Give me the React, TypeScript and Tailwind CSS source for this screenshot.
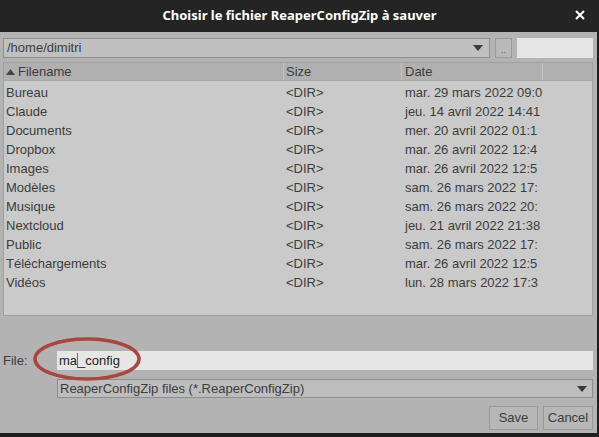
import React from "react";

const rows = [
  ["Bureau", "mar. 29 mars 2022 09:0"],
  ["Claude", "jeu. 14 avril 2022 14:41"],
  ["Documents", "mer. 20 avril 2022 01:1"],
  ["Dropbox", "mar. 26 avril 2022 12:4"],
  ["Images", "mar. 26 avril 2022 12:5"],
  ["Modèles", "sam. 26 mars 2022 17:"],
  ["Musique", "sam. 26 mars 2022 20:"],
  ["Nextcloud", "jeu. 21 avril 2022 21:38"],
  ["Public", "sam. 26 mars 2022 17:"],
  ["Téléchargements", "mar. 26 avril 2022 12:5"],
  ["Vidéos", "lun. 28 mars 2022 17:3"],
];

function Caret() {
  return (
    <svg width="10" height="6" viewBox="0 0 10 6" className="shrink-0">
      <path d="M0 0h10L5 6z" fill="#3a3a3a" />
    </svg>
  );
}

export default function App() {
  return (
    <div
      className="w-[599px] h-[437px] bg-[#1e1e1e] flex flex-col overflow-hidden text-[13px] text-[#3c3c3c]"
      style={{ fontFamily: '"Liberation Sans", Arial, sans-serif' }}
    >
      {/* title bar */}
      <div className="h-[32px] shrink-0 flex items-center relative bg-[#242424]">
        <div
          className="flex-1 text-center text-white font-bold text-[13px]"
          style={{ fontFamily: '"Noto Sans", "Open Sans", sans-serif' }}
        >
          Choisir le fichier ReaperConfigZip à sauver
        </div>
        <div className="absolute right-[14px] top-[10px] text-white">
          <svg width="10" height="10" viewBox="0 0 10 10">
            <path d="M1 1l8 8M9 1l-8 8" stroke="#fff" strokeWidth="2" />
          </svg>
        </div>
      </div>

      {/* body */}
      <div className="flex-1 bg-[#b3b3b3] mr-[2px] mb-[4px] flex flex-col pl-[3px] pr-[4px] pt-[6px] relative">
        {/* path row */}
        <div className="flex items-center h-[20px] gap-[5px]">
          <div className="flex-1 h-full bg-[#c0c0c0] border border-[#8e8e8e] flex items-center pl-[3px] pr-[6px]">
            <span className="flex-1">/home/dimitri</span>
            <Caret />
          </div>
          <div className="w-[17px] h-full border border-[#999] bg-[#b9b9b9] flex items-end justify-center text-[9px] leading-[14px] text-[#555]">
            ..
          </div>
          <div className="w-[76px] h-full bg-[#e6e6e6]" />
        </div>

        {/* list */}
        <div className="mt-[4px] h-[254px] bg-[#cacaca] border border-[#a0a0a0] flex flex-col">
          <div className="h-[18px] bg-[#b0b0b0] flex items-center border-b border-[#a6a6a6]">
            <div className="w-[280px] flex items-center pl-[2px] border-r border-[#c4c4c4] h-full">
              <svg width="9" height="6" viewBox="0 0 9 6" className="mr-[3px]">
                <path d="M0 6L4.5 0 9 6z" fill="#444" />
              </svg>
              Filename
            </div>
            <div className="w-[118px] pl-[2px] border-r border-[#c4c4c4] h-full flex items-center">Size</div>
            <div className="w-[141px] pl-[3px] border-r border-[#c4c4c4] h-full flex items-center">Date</div>
            <div className="flex-1" />
          </div>
          <div className="pt-[2px]">
            {rows.map(([name, date]) => (
              <div key={name} className="h-[19px] flex items-center">
                <div className="w-[280px] pl-[2px]">{name}</div>
                <div className="w-[118px] pl-[2px]">&lt;DIR&gt;</div>
                <div className="w-[140px] pl-[3px] whitespace-nowrap overflow-hidden">{date}</div>
              </div>
            ))}
          </div>
        </div>

        {/* file row */}
        <div className="mt-[35px] flex items-center h-[19px]">
          <div className="w-[54px]">File:</div>
          <div className="flex-1 h-full bg-[#e6e6e6] flex items-center pl-[2px] text-[#222]">
            ma
            <span className="inline-block w-[1px] h-[15px] bg-[#2a7bd6]" />
            _config
          </div>
        </div>

        {/* filter row */}
        <div className="mt-[9px] ml-[54px] h-[19px] bg-[#bdbdbd] border border-[#8e8e8e] flex items-center pl-[2px] pr-[5px]">
          <span className="flex-1">ReaperConfigZip files (*.ReaperConfigZip)</span>
          <Caret />
        </div>

        {/* buttons */}
        <div className="mt-[8px] flex justify-end gap-[5px]">
          <button className="w-[49px] h-[24px] border border-[#999] bg-[#b7b7b7] text-[#3c3c3c]">Save</button>
          <button className="w-[50px] h-[24px] border border-[#999] bg-[#b7b7b7] text-[#3c3c3c]">Cancel</button>
        </div>

        {/* annotation ellipse */}
        <svg className="absolute left-[33px] top-[304px]" width="112" height="46" viewBox="0 0 112 46">
          <ellipse cx="54" cy="23" rx="52" ry="20" fill="none" stroke="#a9463f" strokeWidth="3.5" />
        </svg>
      </div>
    </div>
  );
}
